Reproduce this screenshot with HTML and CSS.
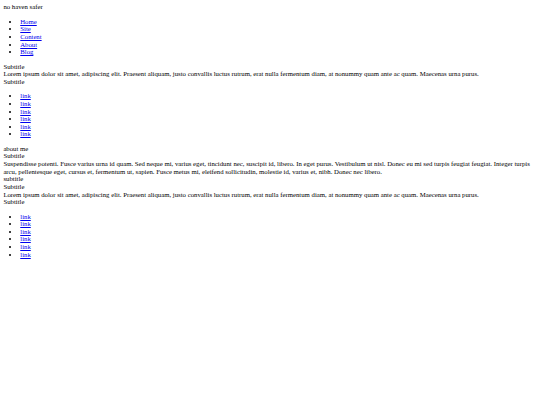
FILE: index.html
```html
<!DOCTYPE html>
<html>
<head>
<meta charset="utf-8">
<title>no haven safer</title>
<link rel="stylesheet" href="styles.css">
</head>
<body class="page">
<div class="site-title">no haven safer</div>
<ul class="list">
<li><a href="#">Home</a></li>
<li><a href="#">Site</a></li>
<li><a href="#">Content</a></li>
<li><a href="#">About</a></li>
<li><a href="#">Blog</a></li>
</ul>
<div class="line">Subtitle</div>
<div class="line">Lorem ipsum dolor sit amet, adipiscing elit. Praesent aliquam, justo convallis luctus rutrum, erat nulla fermentum diam, at nonummy quam ante ac quam. Maecenas urna purus.</div>
<div class="line">Subtitle</div>
<ul class="list">
<li><a href="#">link</a></li>
<li><a href="#">link</a></li>
<li><a href="#">link</a></li>
<li><a href="#">link</a></li>
<li><a href="#">link</a></li>
<li><a href="#">link</a></li>
</ul>
<div class="line">about me</div>
<div class="line">Subtitle</div>
<div class="line">Suspendisse potenti. Fusce varius urna id quam. Sed neque mi, varius eget, tincidunt nec, suscipit id, libero. In eget purus. Vestibulum ut nisl. Donec eu mi sed turpis feugiat feugiat. Integer turpis arcu, pellentesque eget, cursus et, fermentum ut, sapien. Fusce metus mi, eleifend sollicitudin, molestie id, varius et, nibh. Donec nec libero.</div>
<div class="line">subtitle</div>
<div class="line">Subtitle</div>
<div class="line">Lorem ipsum dolor sit amet, adipiscing elit. Praesent aliquam, justo convallis luctus rutrum, erat nulla fermentum diam, at nonummy quam ante ac quam. Maecenas urna purus.</div>
<div class="line">Subtitle</div>
<ul class="list">
<li><a href="#">link</a></li>
<li><a href="#">link</a></li>
<li><a href="#">link</a></li>
<li><a href="#">link</a></li>
<li><a href="#">link</a></li>
<li><a href="#">link</a></li>
</ul>
</body>
</html>
```

FILE: styles.css
```css
html {
  background: #ffffff;
}
.page {
  margin: 3.375px;
  font-family: "Liberation Serif", "Times New Roman", serif;
  font-size: 6.75px;
  line-height: 7.62px;
  color: #000000;
}
.list {
  margin: 6.75px 0;
  padding-left: 16.875px;
  list-style: disc;
}
.list a {
  color: #0000ee;
  text-decoration: underline;
}
```
